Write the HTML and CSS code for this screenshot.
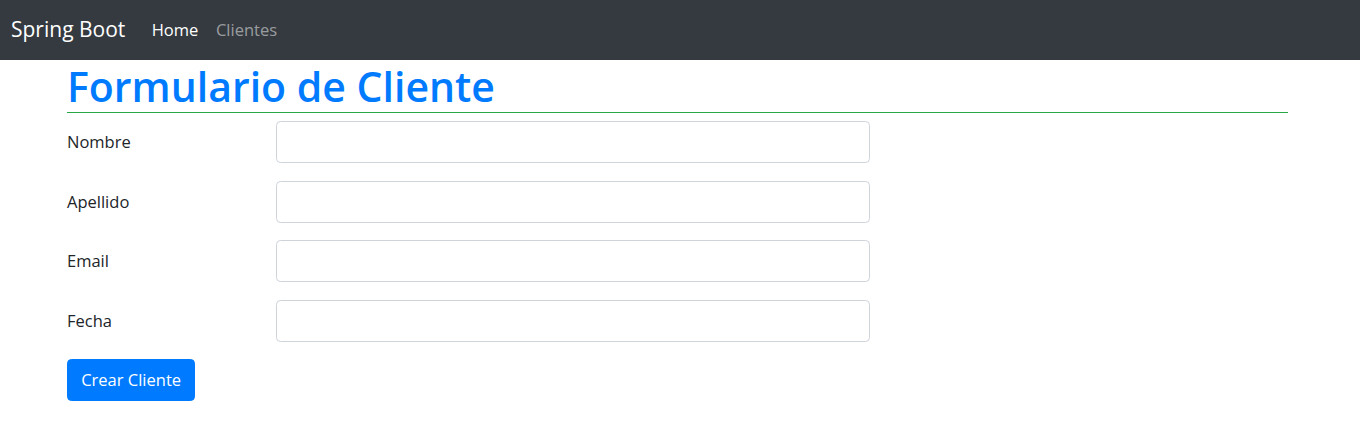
FILE: index.html
```html
<!DOCTYPE html>
<html lang="es">
<head>
<meta charset="utf-8">
<title>Formulario de Cliente</title>
<link rel="stylesheet" href="styles.css">
</head>
<body>
<nav class="navbar">
  <a class="brand" href="#">Spring Boot</a>
  <ul class="nav">
    <li><a class="nav-link active" href="#">Home</a></li>
    <li><a class="nav-link" href="#">Clientes</a></li>
  </ul>
</nav>
<main class="container">
  <h1 class="title">Formulario de Cliente</h1>
  <form class="form">
    <div class="row">
      <label class="label" for="nombre">Nombre</label>
      <div class="field"><input class="input" id="nombre" type="text"></div>
    </div>
    <div class="row">
      <label class="label" for="apellido">Apellido</label>
      <div class="field"><input class="input" id="apellido" type="text"></div>
    </div>
    <div class="row">
      <label class="label" for="email">Email</label>
      <div class="field"><input class="input" id="email" type="text"></div>
    </div>
    <div class="row">
      <label class="label" for="fecha">Fecha</label>
      <div class="field"><input class="input" id="fecha" type="text"></div>
    </div>
    <div class="row">
      <button class="btn" type="submit">Crear Cliente</button>
    </div>
  </form>
</main>
</body>
</html>
```
FILE: styles.css
```css
* { box-sizing: border-box; }
html, body { margin: 0; padding: 0; }
body {
  font-family: "Open Sans", "Noto Sans", sans-serif;
  font-size: 16.5px;
  line-height: 1.5;
  color: #212529;
  background: #fff;
}
.navbar {
  display: flex;
  align-items: center;
  height: 60px;
  padding: 0 11px;
  background: #343a40;
}
.brand {
  font-size: 21px;
  color: #fff;
  text-decoration: none;
  margin-right: 17.6px;
  line-height: 1.5;
}
.nav {
  display: flex;
  list-style: none;
  margin: 0;
  padding: 0;
}
.nav-link {
  display: block;
  padding: 8.8px;
  color: rgba(255,255,255,.5);
  text-decoration: none;
}
.nav-link.active { color: #fff; }
.container {
  width: 1221px;
  margin-left: 67px;
}
.title {
  margin: 0 0 8px;
  height: 53px;
  font-size: 41px;
  font-weight: 600;
  line-height: 52px;
  color: #007bff;
  border-bottom: 1px solid #28a745;
}
.form { display: flex; flex-direction: column; }
.row {
  display: flex;
  margin-bottom: 17.5px;
}
.label {
  width: 209px;
  padding-top: 8px;
  line-height: 26px;
}
.field { width: 594px; }
.input {
  display: block;
  width: 100%;
  height: 42px;
  padding: 6.6px 13.2px;
  font: inherit;
  border: 1px solid #ced4da;
  border-radius: 4.4px;
  background: #fff;
}
.btn {
  height: 42px;
  padding: 6px 13.2px;
  font: inherit;
  color: #fff;
  background: #007bff;
  border: 1px solid #007bff;
  border-radius: 4.4px;
}
```
